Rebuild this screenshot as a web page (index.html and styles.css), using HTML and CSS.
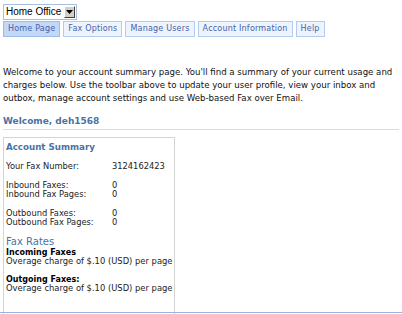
FILE: index.html
```html
<!DOCTYPE html>
<html>
<head>
<meta charset="utf-8">
<link rel="stylesheet" href="styles.css">
</head>
<body>
<div class="page">
  <div class="select">
    <span class="select-text">Home Office</span>
    <span class="select-btn"><svg width="7" height="4" viewBox="0 0 7 4"><path d="M0 0H7L3.5 4Z" fill="#000"/></svg></span>
  </div>
  <div class="tabs">
    <span class="tab active">Home Page</span>
    <span class="tab">Fax Options</span>
    <span class="tab">Manage Users</span>
    <span class="tab">Account Information</span>
    <span class="tab">Help</span>
  </div>
  <p class="intro">Welcome to your account summary page. You'll find a summary of your current usage and charges below. Use the toolbar above to update your user profile, view your inbox and outbox, manage account settings and use Web-based Fax over Email.</p>
  <h2 class="welcome">Welcome, deh1568</h2>
  <div class="box">
    <h3 class="box-title">Account Summary</h3>
    <div class="row"><span class="label">Your Fax Number:</span><span>3124162423</span></div>
    <div class="group">
      <div class="row"><span class="label">Inbound Faxes:</span><span>0</span></div>
      <div class="row"><span class="label">Inbound Fax Pages:</span><span>0</span></div>
    </div>
    <div class="group">
      <div class="row"><span class="label">Outbound Faxes:</span><span>0</span></div>
      <div class="row"><span class="label">Outbound Fax Pages:</span><span>0</span></div>
    </div>
    <h3 class="rates-title">Fax Rates</h3>
    <div class="rate-name">Incoming Faxes</div>
    <div class="rate">Overage charge of $.10 (USD) per page</div>
    <div class="rate-name gap">Outgoing Faxes:</div>
    <div class="rate">Overage charge of $.10 (USD) per page</div>
  </div>
</div>
</body>
</html>
```
FILE: styles.css
```css
html, body { margin: 0; padding: 0; background: #fff; }
body { font-family: "DejaVu Sans", Verdana, sans-serif; font-size: 8px; color: #222; overflow: hidden; height: 314px; }
.page { padding: 4px 0 0 3px; position: relative; height: 310px; }
.page::after { content: ""; position: absolute; left: 0; right: 0; bottom: 1px; height: 1px; background: #9fb4d4; }
.select { display: flex; align-items: center; width: 74px; height: 16px; box-sizing: border-box; border: 1px solid #a9bfe2; background: #fff; }
.select-text { flex: 1; white-space: nowrap; font-family: "Liberation Sans", Arial, sans-serif; font-size: 10px; line-height: 14px; color: #000; padding-left: 2px; }
.select-btn { width: 11px; height: 12px; margin-right: 1px; box-sizing: border-box; background: #d4d0c8; border: 1px solid; border-color: #fff #404040 #404040 #fff; display: flex; align-items: center; justify-content: center; }
.tabs { display: flex; gap: 3px; margin-top: 1px; }
.tab { height: 16px; box-sizing: border-box; border: 1px solid #b3cbee; background: #eef4fd; color: #4463a8; padding: 0 4px; line-height: 14px; font-size: 8px; letter-spacing: 0.2px; white-space: nowrap; }
.tab.active { background: #c2d8f7; border-color: #9dbbe6; }
.intro { margin: 29px 0 0 0; font-size: 8.6px; line-height: 13px; color: #111; width: 398px; }
.welcome { margin: 11px 0 0 0; font-size: 9px; font-weight: bold; color: #4a72a6; padding-bottom: 2px; border-bottom: 1px solid #dcdcdc; line-height: 11px; width: 396px; }
.box { margin-top: 7px; width: 172px; height: 180px; box-sizing: border-box; border: 1px solid #d4d4d4; border-bottom: none; padding: 3px 1px 3px 2px; }
.box-title { margin: 0 0 9px 0; font-size: 8.7px; font-weight: bold; color: #4a72a6; line-height: 12px; }
.row { display: flex; line-height: 9px; font-size: 8.3px; white-space: nowrap; }
.label { width: 106px; }
.group { margin-top: 10px; }
.rates-title { margin: 9px 0 0 0; font-size: 10px; font-weight: normal; color: #4a72a6; line-height: 12px; }
.rate-name { font-weight: bold; color: #000; line-height: 9px; font-size: 8px; white-space: nowrap; }
.rate-name.gap { margin-top: 9px; }
.rate { line-height: 9px; font-size: 8.4px; white-space: nowrap; }
```
